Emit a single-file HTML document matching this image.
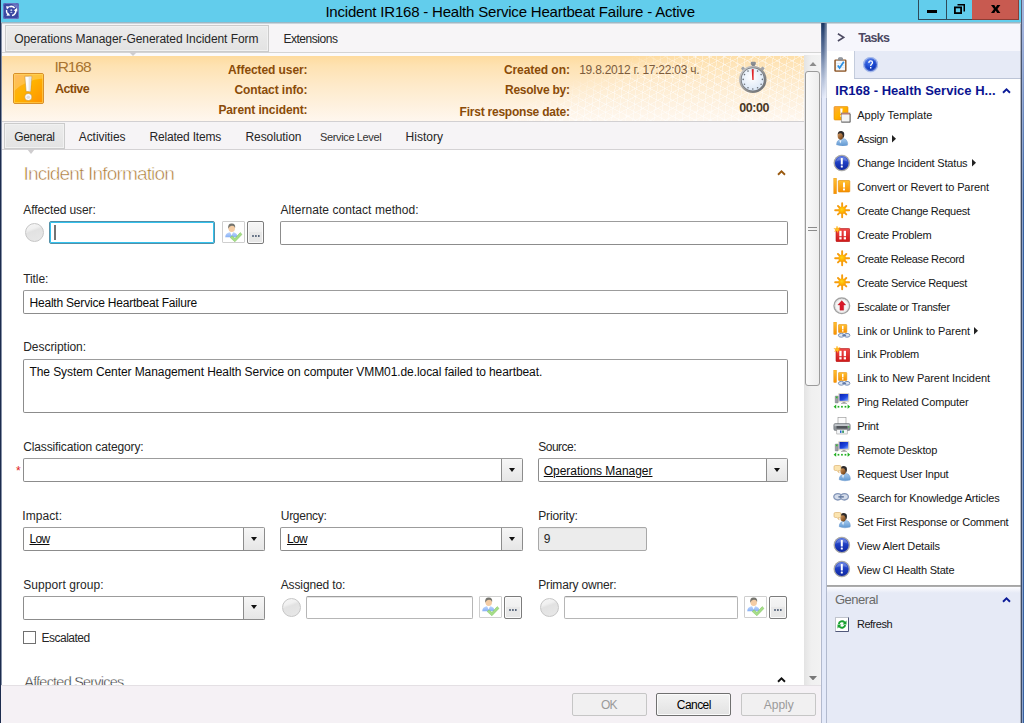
<!DOCTYPE html>
<html><head><meta charset="utf-8"><title>Incident IR168</title>
<style>
html,body{margin:0;padding:0;}
body{width:1024px;height:723px;overflow:hidden;background:#fff;position:relative;font-family:"Liberation Sans",sans-serif;font-size:12px;color:#1e1e1e;}
div,span,svg{position:absolute;box-sizing:border-box;}
.t{white-space:pre;line-height:20px;height:20px;}
#titlebar{left:0;top:0;width:1024px;height:22px;background:#62cdec;}
#tshadow{left:1px;top:22px;width:1020px;height:2px;background:linear-gradient(#86a9b8,#dfe3e8);}
#ledge{left:0;top:0;width:1px;height:723px;background:#1c2c4e;}
#ledge2{left:1px;top:23px;width:1px;height:700px;background:#8590a6;}
#redge{left:1021px;top:0;width:1px;height:723px;background:linear-gradient(#55607a 0,#3e4a62 120px);}
#redge0{left:1020px;top:24px;width:1px;height:699px;background:rgba(120,126,140,.5);}
#redge2{left:1022px;top:0;width:1px;height:723px;background:linear-gradient(#a6b8e0 0,#8aa2cc 180px);}
#redge3{left:1023px;top:0;width:1px;height:723px;background:linear-gradient(#a0b2dc 0,#a0b2dc 30px,#3560a0 200px);}
.wb{top:0;height:20px;border:1px solid #2f4a58;border-top:none;}
#wmin{left:918px;width:29px;}
#wmax{left:946px;width:27px;}
#wclose{left:972px;width:47px;background:#c85a50;border-color:#8c3c34;border-left:none;}
/* top tab row */
#toprow{left:2px;top:24px;width:819px;height:28px;background:#f7f5f7;}
#topline{left:2px;top:52px;width:819px;height:1px;background:#d4d4d4;}
#topgap{left:2px;top:53px;width:819px;height:3px;background:#fbfafb;}
.seltab{border:1px solid #cbcbcb;background:linear-gradient(#ececec,#e3e3e3);box-shadow:inset 0 0 0 1px #f1f1f1;}
#toptab{left:5px;top:25px;width:264px;height:27px;}
/* header */
#hdr{left:2px;top:56px;width:802px;height:65px;background:linear-gradient(#fedb9e 0,#fee2b2 15%,#feeaca 45%,#fef1de 75%,#fff7ee 100%);overflow:hidden;}
#mesh{left:440px;top:0;width:362px;height:65px;background:repeating-linear-gradient(28deg,rgba(255,255,255,.42) 0,rgba(255,255,255,.42) 1px,transparent 1px,transparent 7px),repeating-linear-gradient(96deg,rgba(255,255,255,.38) 0,rgba(255,255,255,.38) 1px,transparent 1px,transparent 7px),repeating-linear-gradient(152deg,rgba(255,255,255,.38) 0,rgba(255,255,255,.38) 1px,transparent 1px,transparent 7px),linear-gradient(rgba(255,255,255,.12),rgba(255,255,255,.12));-webkit-mask-image:linear-gradient(157deg,transparent 36%,#000 50%);mask-image:linear-gradient(157deg,transparent 36%,#000 50%);}
/* tab strip */
#strip{left:2px;top:121px;width:802px;height:29px;background:#f6f4f6;border-top:1px solid #d2d0d2;border-bottom:1px solid #d4d2d4;}
#gentab{left:4px;top:123px;width:61px;height:26px;}
/* scrollbar */
#sb{left:804px;top:55px;width:15.5px;height:630px;background:linear-gradient(90deg,#e3e3e3,#f0f0f0 45%,#f2f2f2);}
#sbr{left:819.5px;top:55px;width:1.5px;height:630px;background:#f6f4f6;}
#sbthumb{left:805px;top:71px;width:15px;height:315px;border:1px solid #9b9b9b;border-radius:3px;background:linear-gradient(90deg,#fafafa,#ededed);}
/* bottom */
#bottom{z-index:5;left:1px;top:685px;width:820px;height:38px;background:#f5f1f5;border-top:1px solid #e4e0e4;}
.btn{z-index:5;top:693px;height:23px;width:75px;border:1px solid #c6c6c6;background:#f1f0f1;border-radius:2px;}
#bcancel{border-color:#707070;background:linear-gradient(#f3f3f3,#e2e2e2);box-shadow:inset 0 0 0 1px #fbfbfb;}
/* inputs */
.inp{border:1px solid #8c8c8c;border-top-color:#9c9c9c;background:#fff;border-radius:2px;}
.inp2{border:1px solid #b6b6b6;border-top-color:#9e9e9e;background:#fff;border-radius:2px;box-shadow:inset 0 1px 0 #e4e4e4;}
.dd{width:21px;border-left:1px solid #8c8c8c;background:linear-gradient(#f6f6f6,#e6e6e6);border-radius:0 1px 1px 0;}
.dd:after{content:"";position:absolute;left:6.5px;top:8.5px;border:3.5px solid transparent;border-top:4px solid #111;border-bottom:none;}
.circ{width:19px;height:19px;border-radius:50%;background:linear-gradient(160deg,#f6f6f6 0,#f0f0f0 30%,#e2e2e2 42%,#e8e8e8 100%);border:1px solid #c6c6c6;}
.ibtn{border:1px solid #cfcfcf;background:#fff;border-radius:1px;}
.ebtn{border:1px solid #7c7c7c;background:linear-gradient(#f6f6f6 0,#f0f0f0 45%,#e8e8e8 50%,#e6e6e6 100%);border-radius:2px;box-shadow:inset 0 0 0 1px #fafafa;}
.ebtn svg{left:50%;margin-left:-3.9px;bottom:6.5px;}
/* splitter */
#split{left:821px;top:23px;width:6px;height:700px;border-left:1px solid #b2bace;border-right:1px solid #b2bace;background:#e4eafa;}
#splitg{left:821px;top:23px;width:6px;height:75px;background:linear-gradient(#1b3662 0,#39527f 12px,#5c7299 27px,#8b9cbb 42px,#b4c0d8 56px,rgba(228,234,250,0) 75px);}
#splith{left:821px;top:23px;width:6px;height:75px;background:linear-gradient(90deg,rgba(255,255,255,.25) 0,rgba(255,255,255,0) 1px,rgba(255,255,255,0) 45%,rgba(255,255,255,.5) 100%);}
/* right panel */
#rp{left:827px;top:24px;width:194px;height:699px;background:#fff;}
#rphead{left:827px;top:24px;width:194px;height:27px;background:#f6f6fc;}
#rptool{left:854px;top:51px;width:167px;height:28px;background:#e6eaf6;border-left:1px solid #c4ccdc;border-bottom:1px solid #bcc4d6;}
#rpline{left:827px;top:585px;width:194px;height:2px;background:linear-gradient(#a2a2a2,#b0b0b0);}
#rpgen{left:827px;top:587px;width:194px;height:136px;background:linear-gradient(#fcfcff 0,#e6eaf6 6px);}
</style></head><body>
<div id="titlebar"></div><div id="tshadow"></div>
<div id="toprow"></div><div id="topline"></div><div id="topgap"></div>
<div id="toptab" class="seltab"></div>
<svg style="left:129px;top:52px" width="8" height="4" viewBox="0 0 8 4"><path d="M0 0H8L4 4Z" fill="#cfcdcf"/></svg>
<div id="hdr"><div id="mesh"></div></div>
<div id="strip"></div><div id="gentab" class="seltab"></div>
<svg style="left:27px;top:149px" width="8" height="5" viewBox="0 0 8 5"><path d="M0 0H8L4 5Z" fill="#cfcdcf"/></svg>
<div id="sb"></div><div id="sbr"></div><div id="sbthumb"></div>
<svg style="left:808.8px;top:61.6px" width="8" height="4.5" viewBox="0 0 8 4.5"><path d="M0 4.500L4 0L8 4.500Z" fill="#8c8c8c"/></svg>
<svg style="left:808.9px;top:675.8px" width="8" height="4.5" viewBox="0 0 8 4.5"><path d="M0 0L4 4.500L8 0Z" fill="#787878"/></svg>
<div style="left:808px;top:227px;width:9px;height:1px;background:#8c8c8c"></div><div style="left:808px;top:230px;width:9px;height:1px;background:#8c8c8c"></div>

<!-- form controls -->
<div class="circ" style="left:25px;top:223px"></div>
<div class="inp" style="left:49px;top:221px;width:166px;height:23px;border:1px solid #5290a8;box-shadow:inset 0 0 0 1px #34c2ee;"></div>
<div style="left:54px;top:225px;width:1.5px;height:15px;background:#747474"></div>
<div class="ibtn" style="left:222px;top:221px;width:23px;height:22px"></div>
<div class="ebtn" style="left:247px;top:221px;width:17px;height:23px"><svg width="8" height="2" viewBox="0 0 8 2"><path d="M.2 0h1.600v2h-1.600zM3.100 0h1.600v2h-1.600zM6 0h1.600v2h-1.600z" fill="#56647a"/></svg></div>
<div class="inp" style="left:280px;top:221px;width:508px;height:24px"></div>
<div class="inp" style="left:23px;top:290px;width:765px;height:24px"></div>
<div class="inp" style="left:23px;top:359px;width:765px;height:54px"></div>
<div class="inp" style="left:23px;top:458px;width:500px;height:24px"><div class="dd" style="right:0;top:0;height:22px"></div></div>
<div class="inp" style="left:538px;top:458px;width:250px;height:24px"><div class="dd" style="right:0;top:0;height:22px"></div></div>
<div class="inp" style="left:23px;top:527px;width:242px;height:24px"><div class="dd" style="right:0;top:0;height:22px"></div></div>
<div class="inp" style="left:280px;top:527px;width:243px;height:24px"><div class="dd" style="right:0;top:0;height:22px"></div></div>
<div class="inp2" style="left:538px;top:527px;width:109px;height:24px;background:#ececec;border-color:#a8a8a8"></div>
<div class="inp" style="left:23px;top:595.5px;width:242px;height:24px"><div class="dd" style="right:0;top:0;height:22px"></div></div>
<div class="circ" style="left:282px;top:597.5px"></div>
<div class="inp2" style="left:306px;top:595.5px;width:167px;height:23px"></div>
<div class="ibtn" style="left:479px;top:595.5px;width:23px;height:22px"></div>
<div class="ebtn" style="left:504px;top:595.5px;width:18px;height:23px"><svg width="8" height="2" viewBox="0 0 8 2"><path d="M.2 0h1.600v2h-1.600zM3.100 0h1.600v2h-1.600zM6 0h1.600v2h-1.600z" fill="#56647a"/></svg></div>
<div class="circ" style="left:539.5px;top:597.5px"></div>
<div class="inp2" style="left:564px;top:595.5px;width:174px;height:23px"></div>
<div class="ibtn" style="left:744px;top:595.5px;width:23px;height:22px"></div>
<div class="ebtn" style="left:769px;top:595.5px;width:18px;height:23px"><svg width="8" height="2" viewBox="0 0 8 2"><path d="M.2 0h1.600v2h-1.600zM3.100 0h1.600v2h-1.600zM6 0h1.600v2h-1.600z" fill="#56647a"/></svg></div>
<div style="left:23px;top:630.5px;width:13px;height:13px;border:1px solid #707070;background:#fff"></div>
<span class="t" style="left:16px;top:461px;font-size:12px;color:#e02020">*</span>

<div id="bottom"></div>
<div class="btn" style="left:572px"></div><div class="btn" id="bcancel" style="left:656px"></div><div class="btn" style="left:741px"></div>

<div id="split"></div><div id="splitg"></div><div id="splith"></div>
<div id="rp"></div><div id="rphead"></div><div id="rptool"></div><div id="rpline"></div><div id="rpgen"></div>

<div id="ledge"></div><div id="ledge2"></div><div id="redge0"></div><div id="redge"></div><div id="redge2"></div><div id="redge3"></div>
<div class="wb" id="wmin"></div><div class="wb" id="wmax"></div><div class="wb" id="wclose"></div>
<svg width="0" height="0" style="left:0;top:0"><defs>
<linearGradient id="gOr" x1="0" y1="0" x2="1" y2="1"><stop offset="0" stop-color="#ffa640"/><stop offset=".45" stop-color="#ffb400"/><stop offset="1" stop-color="#ff9000"/></linearGradient>
<linearGradient id="gOrV" x1="0" y1="0" x2="0" y2="1"><stop offset="0" stop-color="#ffc030"/><stop offset="1" stop-color="#f89000"/></linearGradient>
<linearGradient id="gRed" x1="0" y1="0" x2="0" y2="1"><stop offset="0" stop-color="#f04848"/><stop offset="1" stop-color="#d01818"/></linearGradient>
<linearGradient id="gBlue" x1="0" y1="0" x2="0" y2="1"><stop offset="0" stop-color="#4a6ae0"/><stop offset=".5" stop-color="#1c3cc0"/><stop offset="1" stop-color="#1028a0"/></linearGradient>
<radialGradient id="gStar" cx=".45" cy=".4" r=".6"><stop offset="0" stop-color="#ffd41c"/><stop offset=".6" stop-color="#ffb400"/><stop offset="1" stop-color="#f89c08"/></radialGradient>
<linearGradient id="gBody" x1="0" y1="0" x2="0" y2="1"><stop offset="0" stop-color="#a8ccf0"/><stop offset="1" stop-color="#5e96d0"/></linearGradient>
<linearGradient id="gBody2" x1="0" y1="0" x2="0" y2="1"><stop offset="0" stop-color="#c0d8ff"/><stop offset="1" stop-color="#88b0f4"/></linearGradient>
<linearGradient id="gScr" x1="0" y1="0" x2="1" y2="1"><stop offset="0" stop-color="#0820b0"/><stop offset=".6" stop-color="#2048e0"/><stop offset="1" stop-color="#88b0ff"/></linearGradient>
<linearGradient id="gSkin" x1="0" y1="0" x2=".6" y2="1"><stop offset="0" stop-color="#dca878"/><stop offset=".55" stop-color="#b07844"/><stop offset="1" stop-color="#7c4a1c"/></linearGradient>
<radialGradient id="gFace" cx=".45" cy=".4" r=".6"><stop offset="0" stop-color="#ffffff"/><stop offset="1" stop-color="#dce8f6"/></radialGradient>
<linearGradient id="gRim" x1="0" y1="0" x2="1" y2="1"><stop offset="0" stop-color="#d8d8d8"/><stop offset=".5" stop-color="#9a9a9a"/><stop offset="1" stop-color="#606468"/></linearGradient>
<radialGradient id="gHelp" cx=".4" cy=".3" r=".8"><stop offset="0" stop-color="#4878f0"/><stop offset=".6" stop-color="#1440c8"/><stop offset="1" stop-color="#0828a0"/></radialGradient>
</defs></svg>
<svg style="left:3px;top:3px" width="16" height="16" viewBox="0 0 16 16"><rect width="16" height="16" rx="2" fill="#3a48a2"/><rect x=".5" y=".5" width="15" height="15" rx="1.8" fill="none" stroke="#6876c2"/>
<path d="M9 1.2h5a.8.8 0 0 1 .8.8v6Q13 3.5 9 1.200Z" fill="#9aa6dc" opacity=".55"/>
<g stroke="#fff" fill="none" stroke-width="1.5" stroke-linecap="butt"><path d="M6.4 3.8A4.6 4.6 0 0 1 11.6 5"/><path d="M12.6 6.6A4.7 4.7 0 0 1 9 12.6"/><path d="M3.6 7A4.6 4.6 0 0 0 4.6 11"/></g>
<path d="M3 3.2l3.8.3-2.8 3Z M10.6 7.4l3.300-2.3.5 3.300Z M3.500 12.800l3.800-.2-2.400-3Z" fill="#fff"/>
<circle cx="8.3" cy="7.300" r="1" fill="#c8d0f0"/><path d="M6.900 10q1.400-2 2.800 0Z" fill="#c8d0f0"/></svg>
<svg style="left:927px;top:10px" width="10" height="3" viewBox="0 0 10 3"><rect width="10" height="3" fill="#000"/></svg>
<svg style="left:954px;top:4px" width="11" height="10" viewBox="0 0 11 10"><path d="M3.500 .75H10.250V7.500" fill="none" stroke="#000" stroke-width="1.500"/><rect x=".9" y="3.400" width="6.200" height="5.700" fill="none" stroke="#000" stroke-width="1.800"/></svg>
<svg style="left:991px;top:5px" width="10" height="8" viewBox="0 0 10 8"><path d="M0 0H3.300L4.700 2.500L6.100 0H9.400L6.400 3.950L9.400 7.900H6.100L4.700 5.400L3.300 7.900H0L3 3.950Z" fill="#000"/></svg>
<svg style="left:13px;top:72.7px" width="31" height="31" viewBox="0 0 31 31"><rect x=".5" y=".5" width="30" height="30" rx="1.500" fill="url(#gOr)" stroke="#d8902a"/>
<path d="M1 1H30V5.500Q12 7 1 18Z" fill="#fff" opacity=".22"/>
<rect x="1.500" y="1.500" width="28" height="28" fill="none" stroke="#ffd860" opacity=".6"/>
<path d="M11.800 3.200H18.800L17.600 18.600H13.100Z" fill="#fdfdfd" stroke="#c89430" stroke-width=".6"/>
<path d="M15.600 3.500H18.500L17.400 18.400H15.600Z" fill="#dcdcdc" opacity=".7"/>
<circle cx="15.300" cy="24" r="3.600" fill="#fbfbfb" stroke="#c89430" stroke-width=".6"/><circle cx="15.300" cy="24.200" r="1.800" fill="#dedede"/></svg>
<svg style="left:736px;top:60px" width="34" height="36" viewBox="0 0 34 36"><rect x="14.800" y="1.800" width="5" height="3.200" rx="1" fill="#8a8e94"/><rect x="15.800" y="4.500" width="3" height="2" fill="#7a7e84"/>
<g transform="rotate(-42 16.8 19.4)"><rect x="15.200000000000001" y="3.200" width="3.200" height="3.400" rx=".8" fill="#a0a4aa"/></g>
<g transform="rotate(42 16.8 19.4)"><rect x="15.200000000000001" y="3.200" width="3.200" height="3.400" rx=".8" fill="#a0a4aa"/></g>
<circle cx="16.8" cy="19.4" r="13.700" fill="url(#gRim)"/><circle cx="16.8" cy="19.4" r="11.900" fill="#74787e"/><circle cx="16.8" cy="19.4" r="11.100" fill="url(#gFace)"/>
<circle cx="16.80" cy="9.80" r=".8" fill="#6a7078"/><circle cx="21.60" cy="11.09" r=".8" fill="#6a7078"/><circle cx="25.11" cy="14.60" r=".8" fill="#6a7078"/><circle cx="26.40" cy="19.40" r=".8" fill="#6a7078"/><circle cx="25.11" cy="24.20" r=".8" fill="#6a7078"/><circle cx="21.60" cy="27.71" r=".8" fill="#6a7078"/><circle cx="16.80" cy="29.00" r=".8" fill="#6a7078"/><circle cx="12.00" cy="27.71" r=".8" fill="#6a7078"/><circle cx="8.49" cy="24.20" r=".8" fill="#6a7078"/><circle cx="7.20" cy="19.40" r=".8" fill="#6a7078"/><circle cx="8.49" cy="14.60" r=".8" fill="#6a7078"/><circle cx="12.00" cy="11.09" r=".8" fill="#6a7078"/>
<path d="M15.700000000000001 9.2L17.7 9.2L17.6 20.0L16.3 20.0Z" fill="#e02428"/></svg>
<svg style="left:834px;top:57px" width="13" height="15" viewBox="0 0 13 15"><rect x=".3" y="2.600" width="12.200" height="12.100" rx="1.200" fill="#8c5424"/><rect x="1.800" y="3.600" width="9.300" height="9.800" fill="#f4f8fc"/>
<path d="M2.500 6.500H10.500M2.500 8.500H10.500M2.500 10.500H10.500" stroke="#cfe0f0" stroke-width=".6"/>
<rect x="4" y=".6" width="5" height="3" rx="1" fill="#8c9096"/><rect x="5" y="0" width="3" height="1.500" rx=".7" fill="#a4a8ae"/>
<path d="M3.800 8.500L5.600 11L9.800 4.800" stroke="#2a90e4" stroke-width="1.700" fill="none"/></svg>
<svg style="left:862.7px;top:57px" width="15.5" height="15.5" viewBox="0 0 15.5 15.5"><circle cx="7.600" cy="7.600" r="7.400" fill="#a2b8ee"/><circle cx="7.600" cy="7.600" r="7.400" fill="none" stroke="#8ca6e4" stroke-width=".5"/><circle cx="7.600" cy="7.600" r="6.300" fill="url(#gHelp)"/><circle cx="7.600" cy="7.600" r="5.700" fill="none" stroke="#fff" stroke-width=".6" opacity=".35"/>
<path d="M5.800 5.900Q5.900 3.900 7.700 3.900Q9.500 3.900 9.500 5.600Q9.500 6.600 8.500 7.300Q7.700 7.900 7.700 8.900" stroke="#fff" stroke-width="1.300" fill="none"/><rect x="7" y="10" width="1.400" height="1.500" fill="#fff"/></svg>
<svg style="left:833px;top:106px" width="18" height="17" viewBox="0 0 18 17"><rect x="1" y=".5" width="14" height="13.500" rx="1" fill="url(#gOr)" stroke="#e08c10" stroke-width=".6"/><path d="M7.200 2.500H9.600L9.200 8H7.600Z" fill="#fff"/><rect x="7.500" y="9" width="1.900" height="1.900" fill="#fff"/>
<rect x="8.300" y="7" width="8.700" height="9" fill="#f4f4f4" stroke="#8a8a8a" stroke-width=".7"/><rect x="8.300" y="7" width="8.700" height="1.600" fill="#a04030" opacity=".55"/><path d="M8.500 16.200H17.200V8" stroke="#606060" stroke-width=".8" fill="none"/></svg>
<svg style="left:835px;top:129px" width="14" height="17" viewBox="0 0 14 17"><g transform="translate(0.5 1.2)"><path d="M1 14.600Q.7 11 3.600 9.600L6.500 8.200Q10.600 7.900 11.800 11.500Q12.500 13.500 11.900 15Q6.500 16.700 1 14.600Z" fill="url(#gBody)" stroke="#6a98cc" stroke-width=".4"/>
<path d="M3.800 10.300L4.900 13.400L5.900 10Z" fill="#f2f7fc"/><path d="M3.600 8.200Q5.200 10.300 6.900 8.400L6.700 6Z" fill="#8a5626"/>
<ellipse cx="4.900" cy="5.300" rx="2.800" ry="3.900" fill="url(#gSkin)"/>
<path d="M2.200 4.200Q2.500 .7 5.800 .8Q9.300 1.200 8.700 5.500Q8.400 7.400 7.300 8.200Q7.900 4.600 6.100 3.300Q4 2.500 2.200 4.200Z" fill="#2c2a2c"/></g></svg>
<svg style="left:833px;top:153.5px" width="18" height="18" viewBox="0 0 18 18"><circle cx="8.800" cy="9" r="8" fill="#b0b0b0"/><circle cx="8.800" cy="9" r="7.900" fill="none" stroke="#8c8c8c" stroke-width=".5"/><circle cx="8.800" cy="9" r="6.900" fill="url(#gBlue)"/>
<path d="M3 7.500A6 6 0 0 1 14.600 7.500Q8.800 5 3 7.500Z" fill="#fff" opacity=".22"/>
<rect x="7.800" y="4" width="2" height="6.600" rx=".5" fill="#fff"/><rect x="7.800" y="11.600" width="2" height="2" rx=".5" fill="#fff"/></svg>
<svg style="left:833px;top:178px" width="18" height="17" viewBox="0 0 18 17"><rect x=".8" y=".2" width="2.700" height="15.600" fill="url(#gOrV)" stroke="#e08800" stroke-width=".4"/>
<rect x="5.300" y="2.500" width="11.500" height="11.500" rx=".8" fill="url(#gOrV)" stroke="#e08800" stroke-width=".6"/><rect x="10" y="4.500" width="2" height="5" fill="#fff"/><rect x="10" y="10.500" width="2" height="1.900" fill="#fff"/></svg>
<svg style="left:833.5px;top:202px" width="17" height="17" viewBox="0 0 17 17"><path d="M8.15 8.2L15.15 8.20M8.15 8.2L12.32 12.37M8.15 8.2L8.15 15.20M8.15 8.2L3.98 12.37M8.15 8.2L1.15 8.20M8.15 8.2L3.98 4.03M8.15 8.2L8.15 1.20M8.15 8.2L12.32 4.03" stroke="#f59c0e" stroke-width="1.900" stroke-linecap="round" fill="none"/><circle cx="8.150" cy="8.200" r="3.700" fill="url(#gStar)"/></svg>
<svg style="left:833px;top:226px" width="17" height="16" viewBox="0 0 17 16"><rect x="3" y="2.500" width="13.800" height="13.200" rx="1" fill="url(#gRed)" stroke="#b01818" stroke-width=".6"/>
<rect x="6.300" y="4.800" width="2.300" height="5.400" fill="#fff"/><rect x="6.300" y="11.200" width="2.300" height="2.200" fill="#fff"/><rect x="10.700" y="4.800" width="2.300" height="5.400" fill="#fff"/><rect x="10.700" y="11.200" width="2.300" height="2.200" fill="#fff"/>
<path d="M4 0L4.900 2.200L7.200 1.300L5.800 3.200L7.600 4.600L5.300 4.500L4.800 6.800L3.800 4.700L1.500 5.600L2.800 3.700L.8 2.500L3.200 2.500Z" fill="#ffc020" stroke="#ffa000" stroke-width=".3"/></svg>
<svg style="left:833.5px;top:250px" width="17" height="17" viewBox="0 0 17 17"><path d="M8.15 8.2L15.15 8.20M8.15 8.2L12.32 12.37M8.15 8.2L8.15 15.20M8.15 8.2L3.98 12.37M8.15 8.2L1.15 8.20M8.15 8.2L3.98 4.03M8.15 8.2L8.15 1.20M8.15 8.2L12.32 4.03" stroke="#f59c0e" stroke-width="1.900" stroke-linecap="round" fill="none"/><circle cx="8.150" cy="8.200" r="3.700" fill="url(#gStar)"/></svg>
<svg style="left:833.5px;top:273.9px" width="17" height="17" viewBox="0 0 17 17"><path d="M8.15 8.2L15.15 8.20M8.15 8.2L12.32 12.37M8.15 8.2L8.15 15.20M8.15 8.2L3.98 12.37M8.15 8.2L1.15 8.20M8.15 8.2L3.98 4.03M8.15 8.2L8.15 1.20M8.15 8.2L12.32 4.03" stroke="#f59c0e" stroke-width="1.900" stroke-linecap="round" fill="none"/><circle cx="8.150" cy="8.200" r="3.700" fill="url(#gStar)"/></svg>
<svg style="left:833px;top:297px" width="18" height="18" viewBox="0 0 18 18"><circle cx="8.800" cy="8.800" r="7.800" fill="#f6f6f6" stroke="#a2a2a2" stroke-width="1.400"/><circle cx="8.800" cy="8.800" r="6.600" fill="none" stroke="#dcdcdc" stroke-width=".8"/>
<path d="M8.800 3.600L12.800 8H10.700V13.200H6.900V8H4.800Z" fill="#d81828" stroke="#b01420" stroke-width=".3"/></svg>
<svg style="left:833px;top:322px" width="18" height="17" viewBox="0 0 18 17"><rect x=".8" y="0" width="2.700" height="12.500" fill="url(#gOrV)" stroke="#e08800" stroke-width=".4"/>
<rect x="5.500" y="2.500" width="8.300" height="8" rx=".6" fill="url(#gOrV)" stroke="#e08800" stroke-width=".5"/><rect x="9" y="3.800" width="1.500" height="3.600" fill="#fff"/><rect x="9" y="8.200" width="1.500" height="1.400" fill="#fff"/>
<ellipse cx="8.300" cy="13.300" rx="2.900" ry="1.900" fill="#dce4f0" stroke="#7890b8" stroke-width="1"/><ellipse cx="14" cy="13.300" rx="2.900" ry="1.900" fill="#dce4f0" stroke="#7890b8" stroke-width="1"/><rect x="9.300" y="12.700" width="3.800" height="1.200" fill="#5a74a4"/></svg>
<svg style="left:833px;top:346px" width="17" height="16" viewBox="0 0 17 16"><rect x="3" y="2.500" width="13.800" height="13.200" rx="1" fill="url(#gRed)" stroke="#b01818" stroke-width=".6"/>
<rect x="6.300" y="4.800" width="2.300" height="5.400" fill="#fff"/><rect x="6.300" y="11.200" width="2.300" height="2.200" fill="#fff"/><rect x="10.700" y="4.800" width="2.300" height="5.400" fill="#fff"/><rect x="10.700" y="11.200" width="2.300" height="2.200" fill="#fff"/>
<path d="M4 0L4.900 2.200L7.200 1.300L5.800 3.200L7.600 4.600L5.300 4.500L4.800 6.800L3.800 4.700L1.500 5.600L2.800 3.700L.8 2.500L3.200 2.500Z" fill="#ffc020" stroke="#ffa000" stroke-width=".3"/></svg>
<svg style="left:833px;top:370px" width="18" height="17" viewBox="0 0 18 17"><rect x=".8" y="0" width="2.700" height="12.500" fill="url(#gOrV)" stroke="#e08800" stroke-width=".4"/>
<rect x="5.500" y="2.500" width="8.300" height="8" rx=".6" fill="url(#gOrV)" stroke="#e08800" stroke-width=".5"/><rect x="9" y="3.800" width="1.500" height="3.600" fill="#fff"/><rect x="9" y="8.200" width="1.500" height="1.400" fill="#fff"/>
<ellipse cx="8.300" cy="13.300" rx="2.900" ry="1.900" fill="#dce4f0" stroke="#7890b8" stroke-width="1"/><ellipse cx="14" cy="13.300" rx="2.900" ry="1.900" fill="#dce4f0" stroke="#7890b8" stroke-width="1"/><rect x="9.300" y="12.700" width="3.800" height="1.200" fill="#5a74a4"/></svg>
<svg style="left:833px;top:393.3px" width="18" height="17" viewBox="0 0 18 17"><rect x="5.600" y=".2" width="10.400" height="8.600" rx=".8" fill="#e8e0d0" stroke="#b8b0a0" stroke-width=".4"/><rect x="6.500" y="1" width="8.700" height="6.800" fill="url(#gScr)"/>
<rect x="9.500" y="8.800" width="3" height="1.300" fill="#a0a0a0"/><rect x="8" y="10" width="6" height="1" fill="#b8b8b8"/>
<rect x="2.200" y="3" width="3" height="7" rx=".5" fill="#9a9ea4" stroke="#70747a" stroke-width=".4"/><rect x="2.900" y="3.600" width="1.600" height="1.600" fill="#30c030"/>
<path d="M.6 13.700L3.200 11.600V15.800Z M17.200 13.700L14.600 11.600V15.800Z" fill="#20b020"/><rect x="4.600" y="12.900" width="1.700" height="1.700" fill="#20b020"/><rect x="8.100" y="12.900" width="1.700" height="1.700" fill="#20b020"/><rect x="11.600" y="12.900" width="1.700" height="1.700" fill="#20b020"/></svg>
<svg style="left:833px;top:417px" width="18" height="18" viewBox="0 0 18 18"><rect x="5" y=".5" width="8" height="7" fill="#fcfcfc" stroke="#909090" stroke-width=".6"/>
<rect x=".8" y="6.500" width="16.400" height="7" rx="1.500" fill="#8c9298" stroke="#60666c" stroke-width=".5"/><rect x="1.500" y="7.200" width="15" height="2" fill="#c4c8cc"/><rect x="3.500" y="9" width="11" height="2.600" fill="#50545a"/>
<rect x="3.800" y="12.600" width="10.400" height="4.400" fill="#f4f6f8" stroke="#8a8a8a" stroke-width=".5"/><rect x="7" y="13.500" width="1.500" height="2.400" fill="#2060d0"/><rect x="9.300" y="13.500" width="1.500" height="2.400" fill="#108040"/><rect x="15" y="9.300" width="1.200" height="1.200" fill="#30d030"/></svg>
<svg style="left:833px;top:441.2px" width="18" height="17" viewBox="0 0 18 17"><rect x="5.600" y=".2" width="10.400" height="8.600" rx=".8" fill="#e8e0d0" stroke="#b8b0a0" stroke-width=".4"/><rect x="6.500" y="1" width="8.700" height="6.800" fill="url(#gScr)"/>
<rect x="9.500" y="8.800" width="3" height="1.300" fill="#a0a0a0"/><rect x="8" y="10" width="6" height="1" fill="#b8b8b8"/>
<rect x="2.200" y="3" width="3" height="7" rx=".5" fill="#9a9ea4" stroke="#70747a" stroke-width=".4"/><rect x="2.900" y="3.600" width="1.600" height="1.600" fill="#30c030"/>
<path d="M.6 13.700L3.200 11.600V15.800Z M17.200 13.700L14.600 11.600V15.800Z" fill="#20b020"/><rect x="4.600" y="12.900" width="1.700" height="1.700" fill="#20b020"/><rect x="8.100" y="12.900" width="1.700" height="1.700" fill="#20b020"/><rect x="11.600" y="12.900" width="1.700" height="1.700" fill="#20b020"/></svg>
<svg style="left:833px;top:464.5px" width="18" height="17" viewBox="0 0 18 17"><g transform="translate(5.2 0.1)"><path d="M1 14.600Q.7 11 3.600 9.600L6.500 8.200Q10.600 7.900 11.800 11.500Q12.500 13.500 11.900 15Q6.500 16.700 1 14.600Z" fill="url(#gBody)" stroke="#6a98cc" stroke-width=".4"/>
<path d="M3.800 10.300L4.900 13.400L5.900 10Z" fill="#f2f7fc"/><path d="M3.600 8.200Q5.200 10.300 6.900 8.400L6.700 6Z" fill="#8a5626"/>
<ellipse cx="4.900" cy="5.300" rx="2.800" ry="3.900" fill="url(#gSkin)"/>
<path d="M2.200 4.200Q2.500 .7 5.800 .8Q9.300 1.200 8.700 5.500Q8.400 7.400 7.300 8.200Q7.900 4.600 6.100 3.300Q4 2.500 2.200 4.200Z" fill="#2c2a2c"/></g><path d="M1 1.800Q1 .5 2.500 .5H6.500Q8 .5 8 1.800V4.200Q8 5.500 6.500 5.500H5.600L6.200 7.800L3.800 5.500H2.500Q1 5.500 1 4.200Z" fill="#fbe4b0" stroke="#d8a860" stroke-width=".6"/></svg>
<svg style="left:833px;top:492px" width="17" height="10" viewBox="0 0 17 10"><ellipse cx="4.800" cy="4.800" rx="4" ry="3.200" fill="#d4dcea" stroke="#8496b8" stroke-width="1.300"/><ellipse cx="11.400" cy="4.800" rx="4" ry="3.200" fill="#d4dcea" stroke="#8496b8" stroke-width="1.300"/><rect x="5.400" y="4.100" width="5.400" height="1.500" fill="#62789e"/></svg>
<svg style="left:833px;top:512.3px" width="18" height="17" viewBox="0 0 18 17"><g transform="translate(5.2 0.1)"><path d="M1 14.600Q.7 11 3.600 9.600L6.500 8.200Q10.600 7.900 11.800 11.500Q12.500 13.500 11.900 15Q6.500 16.700 1 14.600Z" fill="url(#gBody)" stroke="#6a98cc" stroke-width=".4"/>
<path d="M3.800 10.300L4.900 13.400L5.900 10Z" fill="#f2f7fc"/><path d="M3.600 8.200Q5.200 10.300 6.900 8.400L6.700 6Z" fill="#8a5626"/>
<ellipse cx="4.900" cy="5.300" rx="2.800" ry="3.900" fill="url(#gSkin)"/>
<path d="M2.200 4.200Q2.500 .7 5.800 .8Q9.300 1.200 8.700 5.500Q8.400 7.400 7.300 8.200Q7.900 4.600 6.100 3.300Q4 2.500 2.200 4.200Z" fill="#2c2a2c"/></g><path d="M1 1.800Q1 .5 2.500 .5H6.500Q8 .5 8 1.800V4.200Q8 5.500 6.500 5.500H5.600L6.200 7.800L3.800 5.500H2.500Q1 5.500 1 4.200Z" fill="#fbe4b0" stroke="#d8a860" stroke-width=".6"/></svg>
<svg style="left:833px;top:535.8px" width="18" height="18" viewBox="0 0 18 18"><circle cx="8.800" cy="9" r="8" fill="#b0b0b0"/><circle cx="8.800" cy="9" r="7.900" fill="none" stroke="#8c8c8c" stroke-width=".5"/><circle cx="8.800" cy="9" r="6.900" fill="url(#gBlue)"/>
<path d="M3 7.500A6 6 0 0 1 14.600 7.500Q8.800 5 3 7.500Z" fill="#fff" opacity=".22"/>
<rect x="7.800" y="4" width="2" height="6.600" rx=".5" fill="#fff"/><rect x="7.800" y="11.600" width="2" height="2" rx=".5" fill="#fff"/></svg>
<svg style="left:833px;top:559.6px" width="18" height="18" viewBox="0 0 18 18"><circle cx="8.800" cy="9" r="8" fill="#b0b0b0"/><circle cx="8.800" cy="9" r="7.900" fill="none" stroke="#8c8c8c" stroke-width=".5"/><circle cx="8.800" cy="9" r="6.900" fill="url(#gBlue)"/>
<path d="M3 7.500A6 6 0 0 1 14.600 7.500Q8.800 5 3 7.500Z" fill="#fff" opacity=".22"/>
<rect x="7.800" y="4" width="2" height="6.600" rx=".5" fill="#fff"/><rect x="7.800" y="11.600" width="2" height="2" rx=".5" fill="#fff"/></svg>
<svg style="left:835px;top:617px" width="14" height="15" viewBox="0 0 14 15"><rect x=".5" y=".5" width="13" height="14" fill="#fff" stroke="#c0c4cc"/><path d="M.5 14.500H13.500V.5" fill="none" stroke="#50587a" stroke-width="1"/>
<path d="M3 7A4 3.600 0 0 1 10.200 4.800L11.500 3.500V7.500H7.500L8.900 6.100A2.300 2 0 0 0 4.800 7Z" fill="#18a030"/><path d="M11 8A4 3.600 0 0 1 3.800 10.200L2.500 11.500V7.500H6.500L5.100 8.900A2.300 2 0 0 0 9.200 8Z" fill="#18a030"/></svg>
<svg style="left:223px;top:222px" width="22" height="22" viewBox="0 0 22 22"><path d="M2.200 15.200Q2.200 10.200 8.600 9.900Q14.600 10.200 14.600 15.200Z" fill="url(#gBody2)"/><path d="M7 10L8.600 13.600L10.200 10Z" fill="#fff"/>
<ellipse cx="8.700" cy="6" rx="3.300" ry="3.900" fill="#f4cca4"/><path d="M5.300 6.800Q4.500 1.500 8.800 1.600Q12.800 1.800 12.100 6Q11.300 3.600 9 3.800Q6.500 3.600 5.300 6.800Z" fill="#74746e"/>
<path d="M7.200 15.600L9.200 13.800L11.900 16.600L17.200 10.600L19 12.400L11.900 19.800Z" fill="#a6de88" stroke="#7cc05c" stroke-width=".5"/></svg>
<svg style="left:480px;top:596px" width="22" height="22" viewBox="0 0 22 22"><path d="M2.200 15.200Q2.200 10.200 8.600 9.900Q14.600 10.200 14.600 15.200Z" fill="url(#gBody2)"/><path d="M7 10L8.600 13.600L10.200 10Z" fill="#fff"/>
<ellipse cx="8.700" cy="6" rx="3.300" ry="3.900" fill="#f4cca4"/><path d="M5.300 6.800Q4.500 1.500 8.800 1.600Q12.800 1.800 12.100 6Q11.300 3.600 9 3.800Q6.500 3.600 5.300 6.800Z" fill="#74746e"/>
<path d="M7.200 15.600L9.200 13.800L11.900 16.600L17.200 10.600L19 12.400L11.900 19.800Z" fill="#a6de88" stroke="#7cc05c" stroke-width=".5"/></svg>
<svg style="left:745px;top:596px" width="22" height="22" viewBox="0 0 22 22"><path d="M2.200 15.200Q2.200 10.200 8.600 9.900Q14.600 10.200 14.600 15.200Z" fill="url(#gBody2)"/><path d="M7 10L8.600 13.600L10.200 10Z" fill="#fff"/>
<ellipse cx="8.700" cy="6" rx="3.300" ry="3.900" fill="#f4cca4"/><path d="M5.300 6.800Q4.500 1.500 8.800 1.600Q12.800 1.800 12.100 6Q11.300 3.600 9 3.800Q6.500 3.600 5.300 6.800Z" fill="#74746e"/>
<path d="M7.200 15.600L9.200 13.800L11.900 16.600L17.200 10.600L19 12.400L11.900 19.800Z" fill="#a6de88" stroke="#7cc05c" stroke-width=".5"/></svg>
<svg style="left:892.3px;top:135px" width="4" height="8" viewBox="0 0 4 8"><path d="M0 0L4 3.800L0 7.600Z" fill="#222"/></svg>
<svg style="left:972.3px;top:159.2px" width="4" height="8" viewBox="0 0 4 8"><path d="M0 0L4 3.800L0 7.600Z" fill="#222"/></svg>
<svg style="left:974.3px;top:326.6px" width="4" height="8" viewBox="0 0 4 8"><path d="M0 0L4 3.800L0 7.600Z" fill="#222"/></svg>
<svg style="left:777.3px;top:169.5px" width="9" height="6.2" viewBox="0 0 9 6.2"><path d="M1 4.8L4.5 1.400L8 4.8" fill="none" stroke="#9a5a10" stroke-width="1.9"/></svg>
<svg style="left:777.3px;top:677px" width="9" height="6.2" viewBox="0 0 9 6.2"><path d="M1 4.8L4.5 1.400L8 4.8" fill="none" stroke="#111" stroke-width="1.9"/></svg>
<svg style="left:1002.3px;top:87.6px" width="9" height="6.2" viewBox="0 0 9 6.2"><path d="M1 4.8L4.5 1.400L8 4.8" fill="none" stroke="#0c1c98" stroke-width="1.9"/></svg>
<svg style="left:1002.3px;top:597px" width="9" height="6.2" viewBox="0 0 9 6.2"><path d="M1 4.8L4.5 1.400L8 4.8" fill="none" stroke="#0c1c98" stroke-width="1.9"/></svg>
<svg style="left:836.5px;top:32.5px" width="8" height="9" viewBox="0 0 8 9"><path d="M.9 .8L6.600 4.400L.9 8" fill="none" stroke="#4c4a62" stroke-width="1.600"/></svg>
<span class="t" style="left:325.40px;top:1.70px;font-size:15px;color:#000;letter-spacing:-0.200px;">Incident IR168 - Health Service Heartbeat Failure - Active</span>
<span class="t" style="left:14.20px;top:29.00px;font-size:12px;color:#262626;letter-spacing:-0.061px;">Operations Manager-Generated Incident Form</span>
<span class="t" style="left:283.40px;top:29.00px;font-size:12px;color:#262626;letter-spacing:-0.467px;">Extensions</span>
<span class="t" style="left:54.40px;top:57.00px;font-size:15.5px;color:#a87430;letter-spacing:-1.060px;">IR168</span>
<span class="t" style="left:54.90px;top:79.30px;font-size:12.5px;color:#8a4b08;font-weight:700;letter-spacing:-0.533px;">Active</span>
<span class="t" style="left:228.00px;top:60.00px;font-size:12px;color:#8a4b08;font-weight:700;letter-spacing:-0.084px;">Affected user:</span>
<span class="t" style="left:234.40px;top:79.80px;font-size:12px;color:#8a4b08;font-weight:700;letter-spacing:-0.066px;">Contact info:</span>
<span class="t" style="left:218.40px;top:99.80px;font-size:12px;color:#8a4b08;font-weight:700;letter-spacing:-0.099px;">Parent incident:</span>
<span class="t" style="left:503.90px;top:59.60px;font-size:12px;color:#8a4b08;font-weight:700;letter-spacing:-0.068px;">Created on:</span>
<span class="t" style="left:505.00px;top:79.60px;font-size:12px;color:#8a4b08;font-weight:700;letter-spacing:-0.246px;">Resolve by:</span>
<span class="t" style="left:459.60px;top:101.80px;font-size:12px;color:#8a4b08;font-weight:700;letter-spacing:-0.232px;">First response date:</span>
<span class="t" style="left:579.20px;top:59.60px;font-size:12px;color:#7c5c3c;letter-spacing:-0.239px;">19.8.2012 г. 17:22:03 ч.</span>
<span class="t" style="left:739.20px;top:98.20px;font-size:12.5px;color:#4a3826;font-weight:700;letter-spacing:-0.455px;">00:00</span>
<span class="t" style="left:14.25px;top:126.50px;font-size:12px;color:#262626;letter-spacing:-0.338px;">General</span>
<span class="t" style="left:78.75px;top:126.50px;font-size:12px;color:#262626;letter-spacing:-0.066px;">Activities</span>
<span class="t" style="left:149.50px;top:126.50px;font-size:12px;color:#262626;letter-spacing:-0.190px;">Related Items</span>
<span class="t" style="left:245.50px;top:126.50px;font-size:12px;color:#262626;letter-spacing:-0.086px;">Resolution</span>
<span class="t" style="left:320.00px;top:126.50px;font-size:11px;color:#333;letter-spacing:-0.362px;">Service Level</span>
<span class="t" style="left:405.50px;top:126.50px;font-size:12px;color:#262626;letter-spacing:0.027px;">History</span>
<span class="t" style="left:23.60px;top:163.70px;font-size:19px;color:#a8742e;letter-spacing:-0.824px;-webkit-text-stroke:0.55px #fff;">Incident Information</span>
<span class="t" style="left:23.25px;top:199.75px;font-size:12px;color:#262626;letter-spacing:-0.095px;">Affected user:</span>
<span class="t" style="left:280.50px;top:199.75px;font-size:12px;color:#262626;letter-spacing:0.056px;">Alternate contact method:</span>
<span class="t" style="left:23.25px;top:268.50px;font-size:12px;color:#262626;letter-spacing:-0.095px;">Title:</span>
<span class="t" style="left:29.50px;top:293.00px;font-size:12px;color:#0c0c0c;letter-spacing:-0.207px;">Health Service Heartbeat Failure</span>
<span class="t" style="left:23.25px;top:337.25px;font-size:12px;color:#262626;letter-spacing:-0.048px;">Description:</span>
<span class="t" style="left:29.50px;top:361.50px;font-size:12px;color:#0c0c0c;letter-spacing:-0.083px;">The System Center Management Health Service on computer VMM01.de.local failed to heartbeat.</span>
<span class="t" style="left:23.25px;top:436.50px;font-size:12px;color:#262626;letter-spacing:-0.133px;">Classification category:</span>
<span class="t" style="left:538.25px;top:436.50px;font-size:12px;color:#262626;letter-spacing:-0.504px;">Source:</span>
<span class="t" style="left:543.75px;top:460.50px;font-size:12px;color:#0c0c0c;letter-spacing:-0.038px;text-decoration:underline;">Operations Manager</span>
<span class="t" style="left:22.25px;top:505.50px;font-size:12px;color:#262626;letter-spacing:0.081px;">Impact:</span>
<span class="t" style="left:280.75px;top:505.50px;font-size:12px;color:#262626;letter-spacing:-0.276px;">Urgency:</span>
<span class="t" style="left:538.25px;top:505.50px;font-size:12px;color:#262626;letter-spacing:-0.136px;">Priority:</span>
<span class="t" style="left:29.50px;top:529.00px;font-size:12px;color:#0c0c0c;letter-spacing:-0.674px;text-decoration:underline;">Low</span>
<span class="t" style="left:287.00px;top:529.00px;font-size:12px;color:#0c0c0c;letter-spacing:-0.674px;text-decoration:underline;">Low</span>
<span class="t" style="left:543.75px;top:529.00px;font-size:12px;color:#262626;">9</span>
<span class="t" style="left:23.25px;top:574.75px;font-size:12px;color:#262626;letter-spacing:0.073px;">Support group:</span>
<span class="t" style="left:280.75px;top:574.75px;font-size:12px;color:#262626;letter-spacing:-0.132px;">Assigned to:</span>
<span class="t" style="left:538.25px;top:574.75px;font-size:12px;color:#262626;letter-spacing:-0.181px;">Primary owner:</span>
<span class="t" style="left:41.50px;top:628.00px;font-size:12px;color:#262626;letter-spacing:-0.503px;">Escalated</span>
<span class="t" style="left:24.25px;top:672.00px;font-size:14.5px;color:#222;letter-spacing:-0.785px;-webkit-text-stroke:0.4px #fff;">Affected Services</span>
<span class="t" style="left:601.00px;top:695.30px;font-size:12px;color:#9a9a9a;letter-spacing:-0.834px;z-index:6;">OK</span>
<span class="t" style="left:676.75px;top:695.30px;font-size:12px;color:#000;letter-spacing:-0.537px;z-index:6;">Cancel</span>
<span class="t" style="left:763.75px;top:695.30px;font-size:12px;color:#9a9a9a;z-index:6;">Apply</span>
<span class="t" style="left:858.20px;top:27.50px;font-size:12.5px;color:#4c4862;font-weight:700;letter-spacing:-0.691px;">Tasks</span>
<span class="t" style="left:835.30px;top:80.70px;font-size:13px;color:#0a1490;font-weight:700;letter-spacing:0.020px;">IR168 - Health Service H...</span>
<span class="t" style="left:857.20px;top:104.60px;font-size:11px;color:#161616;letter-spacing:0.009px;">Apply Template</span>
<span class="t" style="left:857.20px;top:129.00px;font-size:11px;color:#161616;letter-spacing:-0.420px;">Assign</span>
<span class="t" style="left:857.20px;top:153.20px;font-size:11px;color:#161616;letter-spacing:-0.188px;">Change Incident Status</span>
<span class="t" style="left:857.20px;top:177.00px;font-size:11px;color:#161616;letter-spacing:-0.102px;">Convert or Revert to Parent</span>
<span class="t" style="left:857.20px;top:201.00px;font-size:11px;color:#161616;letter-spacing:-0.289px;">Create Change Request</span>
<span class="t" style="left:857.20px;top:224.90px;font-size:11px;color:#161616;letter-spacing:-0.205px;">Create Problem</span>
<span class="t" style="left:857.20px;top:248.90px;font-size:11px;color:#161616;letter-spacing:-0.371px;">Create Release Record</span>
<span class="t" style="left:857.20px;top:272.70px;font-size:11px;color:#161616;letter-spacing:-0.320px;">Create Service Request</span>
<span class="t" style="left:857.20px;top:296.50px;font-size:11px;color:#161616;letter-spacing:-0.293px;">Escalate or Transfer</span>
<span class="t" style="left:857.20px;top:320.50px;font-size:11px;color:#161616;letter-spacing:-0.060px;">Link or Unlink to Parent</span>
<span class="t" style="left:857.20px;top:344.40px;font-size:11px;color:#161616;letter-spacing:-0.194px;">Link Problem</span>
<span class="t" style="left:857.20px;top:368.20px;font-size:11px;color:#161616;letter-spacing:-0.064px;">Link to New Parent Incident</span>
<span class="t" style="left:857.20px;top:392.20px;font-size:11px;color:#161616;letter-spacing:-0.144px;">Ping Related Computer</span>
<span class="t" style="left:857.20px;top:415.60px;font-size:11px;color:#161616;letter-spacing:-0.265px;">Print</span>
<span class="t" style="left:857.20px;top:439.80px;font-size:11px;color:#161616;letter-spacing:-0.131px;">Remote Desktop</span>
<span class="t" style="left:857.20px;top:463.90px;font-size:11px;color:#161616;letter-spacing:-0.195px;">Request User Input</span>
<span class="t" style="left:857.20px;top:487.90px;font-size:11px;color:#161616;letter-spacing:-0.152px;">Search for Knowledge Articles</span>
<span class="t" style="left:857.20px;top:511.70px;font-size:11px;color:#161616;letter-spacing:-0.202px;">Set First Response or Comment</span>
<span class="t" style="left:857.20px;top:535.50px;font-size:11px;color:#161616;letter-spacing:-0.147px;">View Alert Details</span>
<span class="t" style="left:857.20px;top:559.50px;font-size:11px;color:#161616;letter-spacing:-0.209px;">View CI Health State</span>
<span class="t" style="left:835.00px;top:589.50px;font-size:13px;color:#6a6a6a;letter-spacing:-0.493px;">General</span>
<span class="t" style="left:857.00px;top:613.60px;font-size:11px;color:#161616;letter-spacing:-0.500px;">Refresh</span>
</body></html>
